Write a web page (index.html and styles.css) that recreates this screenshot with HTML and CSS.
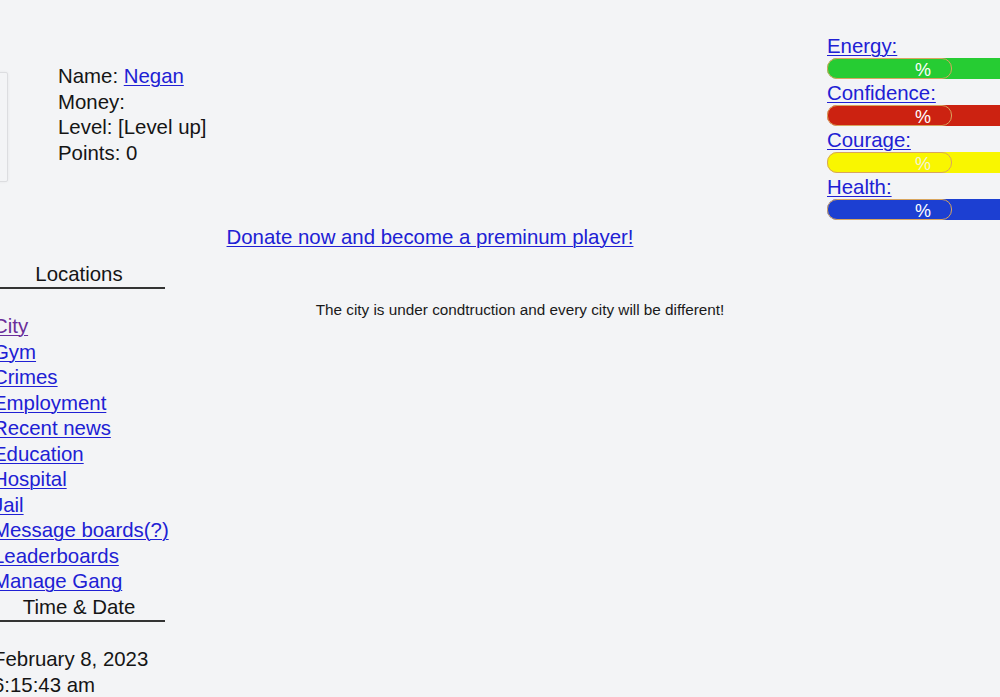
FILE: index.html
```html
<!DOCTYPE html>
<html>
<head>
<meta charset="utf-8">
<link rel="stylesheet" href="styles.css">
</head>
<body>
<div class="page">
  <div class="top">
    <div class="left-head">
      <div class="avatar"></div>
      <div class="info">
        <div>Name: <a href="#">Negan</a></div>
        <div>Money:</div>
        <div>Level: [Level up]</div>
        <div>Points: 0</div>
      </div>
    </div>
    <div class="stats">
      <a class="stat-label" href="#">Energy:</a>
      <div class="bar green"><span class="pill"></span><span class="pct">%</span></div>
      <a class="stat-label" href="#">Confidence:</a>
      <div class="bar red"><span class="pill"></span><span class="pct">%</span></div>
      <a class="stat-label" href="#">Courage:</a>
      <div class="bar yellow"><span class="pill"></span><span class="pct">%</span></div>
      <a class="stat-label" href="#">Health:</a>
      <div class="bar blue"><span class="pill"></span><span class="pct">%</span></div>
    </div>
  </div>
  <div class="donate"><a href="#">Donate now and become a preminum player!</a></div>
  <div class="body-row">
    <div class="sidebar">
      <div class="side-head">Locations</div>
      <div class="spacer"></div>
      <nav class="links">
        <a href="#" class="visited">City</a>
        <a href="#">Gym</a>
        <a href="#">Crimes</a>
        <a href="#">Employment</a>
        <a href="#">Recent news</a>
        <a href="#">Education</a>
        <a href="#">Hospital</a>
        <a href="#">Jail</a>
        <a href="#">Message boards(?)</a>
        <a href="#">Leaderboards</a>
        <a href="#">Manage Gang</a>
      </nav>
      <div class="side-head">Time &amp; Date</div>
      <div class="spacer"></div>
      <div class="plain">February 8, 2023</div>
      <div class="plain">6:15:43 am</div>
    </div>
    <div class="main">
      <p class="notice">The city is under condtruction and every city will be different!</p>
    </div>
  </div>
</div>
</body>
</html>
```

FILE: styles.css
```css
html, body {
  margin: 0;
  padding: 0;
  overflow: hidden;
  background: #f3f4f6;
}
body {
  font-family: "Liberation Sans", Arial, Helvetica, sans-serif;
  font-size: 20.4px;
  line-height: 25.5px;
  color: #151515;
}
a {
  color: #2020d4;
  text-decoration: underline;
  text-underline-offset: 2px;
  text-decoration-thickness: 1px;
  white-space: nowrap;
}
.page {
  width: 1019px;
}
.top {
  display: flex;
  padding-top: 34px;
}
.left-head {
  width: 827px;
  display: flex;
  align-items: flex-start;
}
.avatar {
  width: 120px;
  height: 108px;
  margin-left: -114px;
  margin-top: 38px;
  border: 1px solid #dcdde0;
  box-shadow: 0 0 3px rgba(0,0,0,0.06);
  border-radius: 2px;
}
.info {
  margin-left: 50px;
  margin-top: 30px;
}
.stats {
  width: 192px;
  display: flex;
  flex-direction: column;
  align-items: flex-start;
}
.stat-label {
  display: block;
  height: 24px;
  line-height: 24px;
}
.bar {
  width: 192px;
  height: 21px;
  margin-bottom: 2px;
  display: grid;
  border-radius: 10px 0 0 10px;
}
.bar > * {
  grid-area: 1 / 1;
}
.pill {
  justify-self: start;
  width: 123px;
  height: 19px;
  border: 1px solid #d8a55e;
  border-radius: 10px;
}
.pct {
  justify-self: center;
  align-self: center;
  color: #fff;
  font-size: 18px;
  line-height: 21px;
  padding-top: 2px;
}
.green { background: #26cc33; }
.red { background: #cc2211; }
.yellow { background: #f9f600; }
.yellow .pct { color: #f4f4d8; }
.blue { background: #1c3fd2; }
.donate {
  width: 860px;
  text-align: center;
  margin-top: 3px;
}
.body-row {
  display: flex;
  margin-top: 11px;
}
.sidebar {
  width: 172px;
  margin-left: -7px;
  flex: none;
}
.side-head {
  text-align: center;
  border-bottom: 2px solid #333;
  height: 25px;
}
.spacer {
  height: 25.5px;
}
.links {
  display: flex;
  flex-direction: column;
  align-items: flex-start;
}
.links a.visited {
  color: #6a2d9a;
}
.main {
  width: 710px;
  text-align: center;
  padding-top: 40px;
}
.notice {
  margin: 0;
  font-size: 15.3px;
  line-height: 16px;
  color: #1a1a1a;
}
```
